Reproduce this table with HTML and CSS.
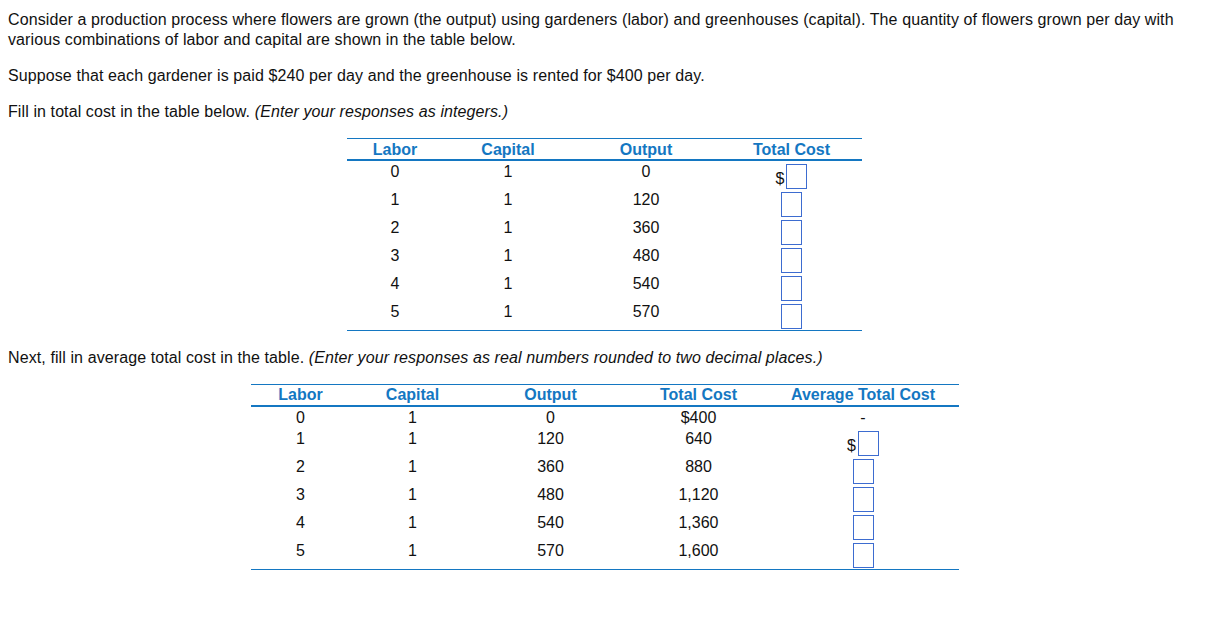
FILE: index.html
```html
<!DOCTYPE html>
<html>
<head>
<meta charset="utf-8">
<link rel="stylesheet" href="styles.css">
</head>
<body>
<div class="page">
  <p class="intro">Consider a production process where flowers are grown (the output) using gardeners (labor) and greenhouses (capital). The quantity of flowers grown per day with various combinations of labor and capital are shown in the table below.</p>
  <p class="intro">Suppose that each gardener is paid $240 per day and the greenhouse is rented for $400 per day.</p>
  <p class="intro">Fill in total cost in the table below. <em>(Enter your responses as integers.)</em></p>

  <table class="data t1">
    <colgroup><col class="c1"><col class="c2"><col class="c3"><col class="c4"></colgroup>
    <thead>
      <tr><th>Labor</th><th>Capital</th><th>Output</th><th class="tc">Total Cost</th></tr>
    </thead>
    <tbody>
      <tr class="first"><td>0</td><td>1</td><td>0</td><td class="tc"><span class="cell-in"><span class="cur">$</span><span class="box"></span></span></td></tr>
      <tr><td>1</td><td>1</td><td>120</td><td class="tc"><span class="box"></span></td></tr>
      <tr><td>2</td><td>1</td><td>360</td><td class="tc"><span class="box"></span></td></tr>
      <tr><td>3</td><td>1</td><td>480</td><td class="tc"><span class="box"></span></td></tr>
      <tr><td>4</td><td>1</td><td>540</td><td class="tc"><span class="box"></span></td></tr>
      <tr><td>5</td><td>1</td><td>570</td><td class="tc"><span class="box"></span></td></tr>
    </tbody>
  </table>

  <p class="intro next">Next, fill in average total cost in the table. <em>(Enter your responses as real numbers rounded to two decimal places.)</em></p>

  <table class="data t2">
    <colgroup><col class="d1"><col class="d2"><col class="d3"><col class="d4"><col class="d5"></colgroup>
    <thead>
      <tr><th>Labor</th><th>Capital</th><th>Output</th><th>Total Cost</th><th class="atc">Average Total Cost</th></tr>
    </thead>
    <tbody>
      <tr class="first"><td>0</td><td>1</td><td>0</td><td>$400</td><td class="atc">-</td></tr>
      <tr><td>1</td><td>1</td><td>120</td><td>640</td><td class="atc"><span class="cell-in"><span class="cur">$</span><span class="box"></span></span></td></tr>
      <tr><td>2</td><td>1</td><td>360</td><td>880</td><td class="atc"><span class="box"></span></td></tr>
      <tr><td>3</td><td>1</td><td>480</td><td>1,120</td><td class="atc"><span class="box"></span></td></tr>
      <tr><td>4</td><td>1</td><td>540</td><td>1,360</td><td class="atc"><span class="box"></span></td></tr>
      <tr><td>5</td><td>1</td><td>570</td><td>1,600</td><td class="atc"><span class="box"></span></td></tr>
    </tbody>
  </table>
</div>
</body>
</html>
```

FILE: styles.css
```css
html, body {
  margin: 0;
  padding: 0;
  background: #ffffff;
}

body {
  font-family: "Liberation Sans", Arial, sans-serif;
  font-size: 16px;
  color: #111111;
}

.page {
  padding: 10px 8px 0 8px;
}

.intro {
  margin: 0 0 16px 0;
  line-height: 20px;
  letter-spacing: 0.1px;
}

.intro.next {
  margin: 17px 0 16px 0;
}

.data {
  border-collapse: collapse;
  margin: 0 auto;
  table-layout: fixed;
  border-top: 1px solid #1477c2;
  border-bottom: 1px solid #1477c2;
}

.t1 {
  width: 515px;
  margin-top: 16px;
}

.t2 {
  width: 708px;
}

.c1 { width: 96px; }
.c2 { width: 130px; }
.c3 { width: 146px; }
.c4 { width: 143px; }

.d1 { width: 100px; }
.d2 { width: 124px; }
.d3 { width: 152px; }
.d4 { width: 144px; }
.d5 { width: 188px; }

.data th {
  color: #1477c2;
  font-weight: bold;
  text-align: center;
  padding: 2px 0;
  line-height: 16px;
  border-bottom: 2px solid #1477c2;
}

.t1 th {
  padding: 3px 0 1px 0;
}

.data td {
  text-align: center;
  vertical-align: top;
  padding: 2px 0 1px 0;
  line-height: 16px;
  height: 25px;
  box-sizing: content-box;
}

.data tr.first td {
  padding-top: 3px;
}

.t1 tr.first td {
  height: 25px;
}

.t2 tr.first td {
  height: 19px;
  padding-bottom: 0;
}

.t1 .tc {
  padding-left: 2px;
}

.t2 .atc {
  padding-right: 3px;
}

.cell-in {
  display: inline-flex;
  align-items: center;
  vertical-align: top;
}

.cur {
  line-height: 16px;
  padding-top: 4px;
  margin-right: 2px;
}

.box {
  display: inline-block;
  vertical-align: top;
  width: 19px;
  height: 23px;
  border: 1px solid #3d6cd0;
  background: #ffffff;
}
```
